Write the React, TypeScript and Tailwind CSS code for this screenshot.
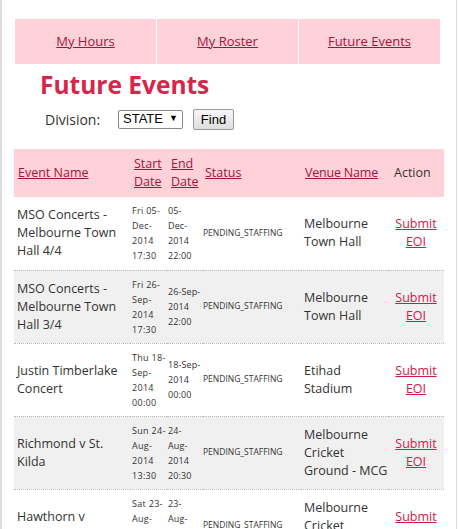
import React from "react";

type Row = {
  name: string;
  start: string[];
  end: string[];
  venue: string;
};

const rows: Row[] = [
  { name: "MSO Concerts - Melbourne Town Hall 4/4", start: ["Fri 05-", "Dec-", "2014", "17:30"], end: ["05-", "Dec-", "2014", "22:00"], venue: "Melbourne Town Hall" },
  { name: "MSO Concerts - Melbourne Town Hall 3/4", start: ["Fri 26-", "Sep-", "2014", "17:30"], end: ["26-Sep-", "2014", "22:00"], venue: "Melbourne Town Hall" },
  { name: "Justin Timberlake Concert", start: ["Thu 18-", "Sep-", "2014", "00:00"], end: ["18-Sep-", "2014", "00:00"], venue: "Etihad Stadium" },
  { name: "Richmond v St. Kilda", start: ["Sun 24-", "Aug-", "2014", "13:30"], end: ["24-", "Aug-", "2014", "20:30"], venue: "Melbourne Cricket Ground - MCG" },
  { name: "Hawthorn v Essendon", start: ["Sat 23-", "Aug-", "2014", "13:30"], end: ["23-", "Aug-", "2014", "20:30"], venue: "Melbourne Cricket Ground - MCG" },
];

const font = { fontFamily: '"Open Sans", "DejaVu Sans", sans-serif' };

export default function App() {
  return (
    <div className="w-[458px] h-[529px] overflow-hidden bg-white">
      <div
        className="w-[457px] min-h-[529px] border-l-2 border-r border-[#dcdcdc] pt-[19px] pl-[12px] pr-[15px] text-[#333]"
        style={font}
      >
        <nav className="flex w-[425px] h-[45px] gap-px ml-px">
          {["My Hours", "My Roster", "Future Events"].map((t) => (
            <div key={t} className="flex-1 bg-[#ffd1d8] flex items-center justify-center">
              <a href="#" className="text-[13px] text-[#a3143a] underline">{t}</a>
            </div>
          ))}
        </nav>
        <h1 className="text-[24.5px] font-bold text-[#d6264a] leading-[30px] mt-[6px] ml-[26px]">Future Events</h1>
        <div className="flex items-center mt-[9px] ml-[31px] h-[20px]">
          <span className="text-[14px] text-[#333] w-[73px]">Division:</span>
          <div className="w-[65px] h-[19px] border border-[#888] rounded-[2px] flex items-center justify-between px-[4px] bg-white" style={{ fontFamily: '"Liberation Sans", Arial, sans-serif' }}>
            <span className="text-[13px] text-black">STATE</span>
            <span className="text-[9px] text-black">▼</span>
          </div>
          <button className="ml-[10px] w-[41px] h-[21px] border border-[#999] rounded-[2px] bg-gradient-to-b from-[#f6f6f6] to-[#dedede] text-[13px] text-black" style={{ fontFamily: '"Liberation Sans", Arial, sans-serif' }}>Find</button>
        </div>
        <table className="table-fixed border-collapse w-[430px] mt-[20px]">
          <colgroup>
            <col className="w-[116px]" />
            <col className="w-[37px]" />
            <col className="w-[36px]" />
            <col className="w-[98px]" />
            <col className="w-[87px]" />
            <col className="w-[56px]" />
          </colgroup>
          <thead>
            <tr className="bg-[#ffd1d8] h-[48px] text-[12.5px] leading-[18px]">
              <th className="text-left font-normal pl-[4px]"><a href="#" className="underline text-[#a3143a]">Event Name</a></th>
              <th className="text-left font-normal pl-[4px]"><a href="#" className="underline text-[#a3143a]">Start Date</a></th>
              <th className="text-left font-normal pl-[4px]"><a href="#" className="underline text-[#a3143a]">End Date</a></th>
              <th className="text-left font-normal pl-[2px]"><a href="#" className="underline text-[#a3143a]">Status</a></th>
              <th className="text-left font-normal pl-[4px]"><a href="#" className="underline text-[#a3143a] tracking-[-0.2px]">Venue Name</a></th>
              <th className="text-left font-normal pl-[6px] text-[#333]">Action</th>
            </tr>
          </thead>
          <tbody>
            {rows.map((r, i) => (
              <tr key={i} className={`${i % 2 === 1 ? "bg-[#f0f0f0]" : "bg-white"} h-[73px] border-b border-dotted border-[#bbb]`}>
                <td className="pl-[3px] pr-[2px] text-[12.5px] leading-[18px] align-middle">{r.name}</td>
                <td className="pl-[2px] text-[9px] tracking-[0.3px] leading-[15px] align-middle py-[5px]">{r.start.map((s, k) => <div key={k} className="whitespace-nowrap">{s}</div>)}</td>
                <td className="pl-[1px] text-[9px] tracking-[0.1px] leading-[15px] align-middle py-[5px]">{r.end.map((s, k) => <div key={k} className="whitespace-nowrap">{s}</div>)}</td>
                <td className="pl-0 text-[8.5px] align-middle">PENDING_STAFFING</td>
                <td className="pl-[3px] text-[12.5px] leading-[18px] align-middle">{r.venue}</td>
                <td className="text-center text-[12.5px] leading-[18px] align-middle"><a href="#" className="underline text-[#d0184a]">Submit<br />EOI</a></td>
              </tr>
            ))}
          </tbody>
        </table>
      </div>
    </div>
  );
}
